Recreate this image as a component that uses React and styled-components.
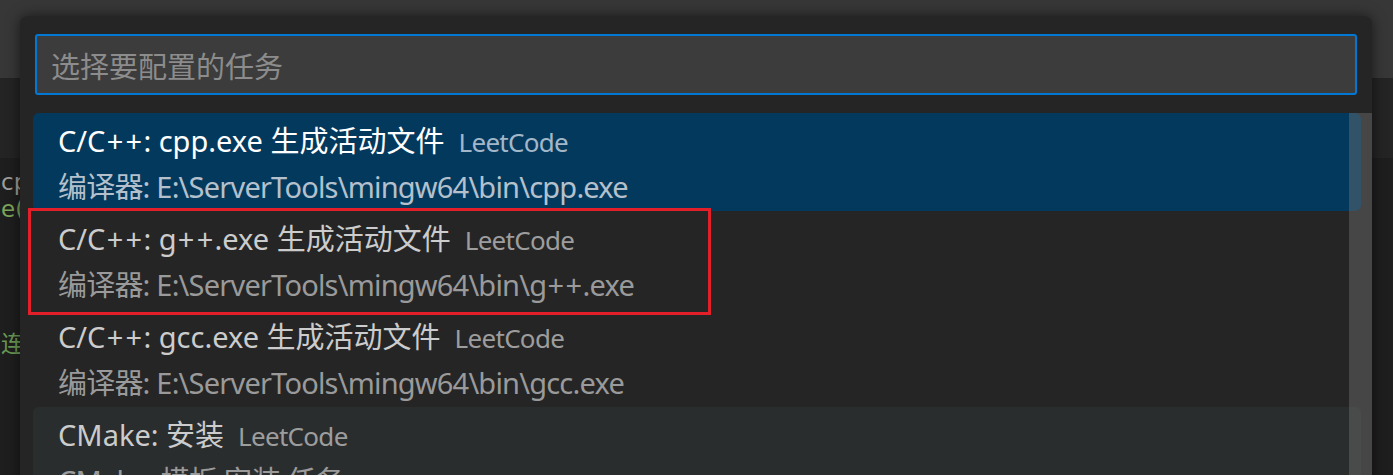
import React from 'react';
import styled, { createGlobalStyle } from 'styled-components';

const Global = createGlobalStyle`
  html, body { margin: 0; padding: 0; background: #1e1e1e; }
  body { font-family: "Noto Sans", "Noto Sans CJK SC", sans-serif; }
`;

const Screen = styled.div`
  position: relative;
  width: 1393px;
  height: 475px;
  overflow: hidden;
  background: #1e1e1e;
  display: flex;
  flex-direction: column;
`;

const TitleBar = styled.div`
  height: 78px;
  flex-shrink: 0;
  background: #373737;
`;

const TabStrip = styled.div`
  height: 80px;
  flex-shrink: 0;
  background: #242424;
`;

const Editor = styled.div`
  flex: 1;
  padding-top: 11px;
  background: #1e1e1e;
  font-family: "DejaVu Sans", "Noto Sans CJK SC", sans-serif;
  font-size: 23px;
`;

const CodeLine = styled.div`
  height: 27px;
  line-height: 27px;
  padding-left: 1px;
  white-space: pre;
  color: ${p => p.color || '#9d9d9d'};
`;

const Picker = styled.div`
  position: absolute;
  left: 20px;
  top: 16px;
  width: 1352px;
  height: 480px;
  background: #252526;
  border-radius: 8px;
  box-shadow: 0 0 14px rgba(0, 0, 0, 0.55);
  padding: 18px 15px 0;
  box-sizing: border-box;
  display: flex;
  flex-direction: column;
`;

const InputBox = styled.div`
  height: 61px;
  flex-shrink: 0;
  box-sizing: border-box;
  border: 2px solid #0078d4;
  border-radius: 3px;
  background: #3c3c3c;
  display: flex;
  align-items: center;
  padding-left: 14px;
  font-size: 29px;
  color: #8c8c8c;
`;

const List = styled.div`
  position: relative;
  margin: 18px -15px 0 -2px;
  flex: 1;
  display: flex;
  flex-direction: column;
`;

const Row = styled.div`
  height: 98px;
  flex-shrink: 0;
  margin-right: 11px;
  padding: 5px 0 0 25px;
  box-sizing: border-box;
  border-radius: 6px;
  background: ${p => (p.active ? '#04395e' : p.hover ? '#2a2d2e' : 'transparent')};
`;

const Title = styled.div`
  height: 46px;
  line-height: 46px;
  font-size: 29px;
  white-space: nowrap;
  color: ${p => (p.active ? '#ffffff' : '#cccccc')};
`;

const Plus = styled.span`
  margin: 0 1.2px;
`;

const Label = styled.span`
  font-size: 26px;
  margin-left: 14px;
  letter-spacing: -0.7px;
  color: ${p => (p.active ? '#a3b7c8' : '#9d9d9d')};
`;

const Detail = styled.div`
  height: 46px;
  line-height: 46px;
  font-size: 29px;
  letter-spacing: -0.8px;
  white-space: nowrap;
  color: ${p => (p.active ? '#b4c1cc' : '#9a9a9a')};
`;

const ScrollThumb = styled.div`
  position: absolute;
  top: 0;
  right: 0;
  bottom: 0;
  width: 23px;
  background: rgba(121, 121, 121, 0.4);
`;

const Highlight = styled.div`
  position: absolute;
  left: 28px;
  top: 208px;
  width: 683px;
  height: 107px;
  box-sizing: border-box;
  border: 3px solid #e3202a;
  pointer-events: none;
`;

const items = [
  { title: 'C/C++: cpp.exe 生成活动文件', label: 'LeetCode', detail: '编译器: E:\\ServerTools\\mingw64\\bin\\cpp.exe', active: true },
  { title: 'C/C++: g++.exe 生成活动文件', label: 'LeetCode', detail: '编译器: E:\\ServerTools\\mingw64\\bin\\g++.exe' },
  { title: 'C/C++: gcc.exe 生成活动文件', label: 'LeetCode', detail: '编译器: E:\\ServerTools\\mingw64\\bin\\gcc.exe' },
  { title: 'CMake: 安装', label: 'LeetCode', detail: 'CMake: 模板 安装 任务', hover: true },
];

// Segoe UI draws "+" with wider side bearings than Noto Sans
function spaced(text) {
  return text.split('+').flatMap((part, i) =>
    i === 0 ? [part] : [<Plus key={i}>+</Plus>, part]
  );
}

export default function App() {
  return (
    <>
      <Global />
      <Screen>
        <TitleBar />
        <TabStrip />
        <Editor>
          <CodeLine color="#9d9d9d">cpp</CodeLine>
          <CodeLine color="#7ca65a">e(</CodeLine>
          <CodeLine />
          <CodeLine />
          <CodeLine />
          <CodeLine />
          <CodeLine color="#6a9955">连接</CodeLine>
        </Editor>

        <Picker>
          <InputBox>选择要配置的任务</InputBox>
          <List>
            {items.map((it, i) => (
              <Row key={i} active={it.active} hover={it.hover}>
                <Title active={it.active}>
                  {spaced(it.title)}
                  <Label active={it.active}>{it.label}</Label>
                </Title>
                <Detail active={it.active}>{spaced(it.detail)}</Detail>
              </Row>
            ))}
            <ScrollThumb />
          </List>
        </Picker>

        <Highlight />
      </Screen>
    </>
  );
}
